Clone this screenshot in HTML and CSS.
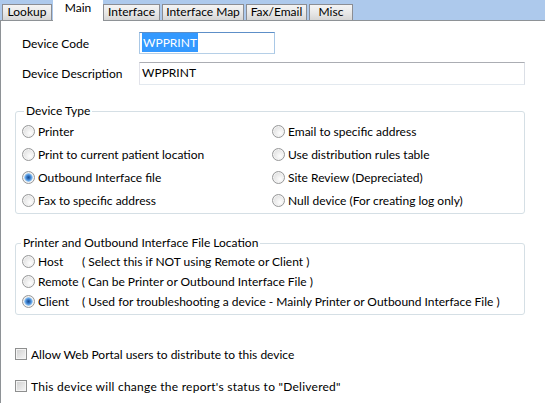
FILE: index.html
```html
<!DOCTYPE html>
<html>
<head>
<meta charset="utf-8">
<link rel="stylesheet" href="styles.css">
</head>
<body>
<div class="tabs">
  <div class="tab t-lookup">Lookup</div>
  <div class="tab active t-main">Main</div>
  <div class="tab t-interface">Interface</div>
  <div class="tab t-map">Interface Map</div>
  <div class="tab t-fax">Fax/Email</div>
  <div class="tab t-misc">Misc</div>
</div>
<div class="panel">
  <div class="row first">
    <span class="label">Device Code</span>
    <div class="textbox focused short"><span class="sel">WPPRINT</span></div>
  </div>
  <div class="row second">
    <span class="label">Device Description</span>
    <div class="textbox long">WPPRINT</div>
  </div>

  <fieldset class="group type">
    <legend>Device Type</legend>
    <div class="grid">
      <div class="opt"><span class="radio"></span>Printer</div>
      <div class="opt"><span class="radio"></span>Email to specific address</div>
      <div class="opt"><span class="radio"></span>Print to current patient location</div>
      <div class="opt"><span class="radio"></span>Use distribution rules table</div>
      <div class="opt"><span class="radio checked"></span>Outbound Interface file</div>
      <div class="opt"><span class="radio"></span>Site Review (Depreciated)</div>
      <div class="opt"><span class="radio"></span>Fax to specific address</div>
      <div class="opt"><span class="radio"></span>Null device (For creating log only)</div>
    </div>
  </fieldset>

  <fieldset class="group location">
    <legend>Printer and Outbound Interface File Location</legend>
    <div class="opt loc"><span class="radio"></span><span class="name">Host</span>( Select this if NOT using Remote or Client )</div>
    <div class="opt loc"><span class="radio"></span>Remote&nbsp;( Can be Printer or Outbound Interface File )</div>
    <div class="opt loc"><span class="radio checked"></span><span class="name">Client</span>( Used for troubleshooting a device - Mainly Printer or Outbound Interface File )</div>
  </fieldset>

  <div class="check-row first-check"><span class="checkbox"></span>Allow Web Portal users to distribute to this device</div>
  <div class="check-row wide"><span class="checkbox"></span>This device will change the report's status to "Delivered"</div>
</div>
</body>
</html>
```

FILE: styles.css
```css
html, body {
  margin: 0;
  padding: 0;
  background: #fff;
}
body {
  font-family: Lato, "Open Sans", sans-serif;
  font-size: 12px;
  color: #000;
  width: 545px;
  height: 403px;
  overflow: hidden;
}
.tabs {
  display: flex;
  align-items: flex-end;
  height: 20px;
  background: #adc9ec;
  border-bottom: 1px solid #8e9296;
  padding-left: 2px;
}
.tab {
  box-sizing: border-box;
  height: 16px;
  padding: 0;
  margin-right: 2px;
  border: 1px solid #8b8d93;
  border-bottom: none;
  background: linear-gradient(#f4f4f4, #e8e8e8 50%, #d6d6d6);
  line-height: 14px;
  text-align: center;
  white-space: nowrap;
}
.t-lookup { width: 50px; }
.t-interface { width: 57px; }
.t-map { width: 82px; }
.t-fax { width: 61px; }
.t-misc { width: 44px; }
.tab.active {
  width: 50px;
  height: 21px;
  margin: 0 0 -1px -1px;
  padding: 1px 0 0 0;
  border: none;
  background: #fff;
}
.panel {
  border-left: 1px solid #8e9296;
  padding-left: 14px;
  height: 382px;
}
.row {
  display: flex;
  align-items: center;
  margin-left: 7px;
}
.row.first {
  padding-top: 11px;
}
.row.second {
  margin-top: 8px;
}
.label {
  width: 117px;
}
.textbox {
  box-sizing: border-box;
  height: 22px;
  border: 1px solid;
  border-color: #abadb3 #dbdfe6 #e3e9ef #e2e3ea;
  padding: 0 2px;
  line-height: 20px;
  white-space: nowrap;
}
.textbox.short {
  width: 136px;
}
.textbox.long {
  width: 386px;
  height: 23px;
}
.textbox.focused {
  border-color: #5d8fc8 #a9c8e6 #b5cfe7 #a9c8e6;
}
.sel {
  background: #3399ff;
  color: #fff;
  padding: 2px 1px;
}
.group {
  box-sizing: border-box;
  width: 510px;
  margin: 18px 0 0 0;
  padding: 1px 0 1px 0;
  border: 1px solid #d5dfe5;
  border-radius: 3px;
  min-width: 0;
}
.group legend {
  margin-left: 8px;
  padding: 0 2px;
  line-height: 16px;
}
.group.location {
  margin-top: 21px;
  padding: 0 0 3px 0;
}
.group.location legend {
  margin-left: 5px;
}
.grid {
  display: grid;
  grid-template-columns: 250px 1fr;
}
.opt {
  display: flex;
  align-items: center;
  height: 23px;
  padding-left: 6px;
  white-space: pre;
}
.opt.loc {
  height: 20px;
}
.name {
  width: 44px;
}
.radio {
  box-sizing: border-box;
  flex: none;
  width: 13px;
  height: 13px;
  margin-right: 3px;
  border-radius: 50%;
  border: 1px solid #979899;
  background: radial-gradient(circle at 65% 65%, #fefefe 0, #ececec 45%, #d6d6d6 100%);
  box-shadow: inset 0 0 0 1px #f4f4f4;
}
.radio.checked {
  background:
    radial-gradient(circle at 50% 50%, #1a4f92 0, #2d6cb9 1.5px, #5fa0e4 3px, #9ccaf2 4px, rgba(255,255,255,0) 4.6px),
    radial-gradient(circle at 65% 65%, #fefefe 0, #ececec 45%, #d6d6d6 100%);
}
.check-row {
  display: flex;
  align-items: center;
  height: 20px;
  margin-top: 12px;
}
.check-row.first-check {
  margin-top: 29px;
}
.check-row.wide {
  letter-spacing: 0.25px;
}
.checkbox {
  box-sizing: border-box;
  flex: none;
  width: 12px;
  height: 12px;
  margin-right: 4px;
  border: 1px solid #8e8f8f;
  box-shadow: inset 0 0 0 1px #f4f4f4;
  background: linear-gradient(135deg, #cfcfcf, #f6f6f6);
}
```
